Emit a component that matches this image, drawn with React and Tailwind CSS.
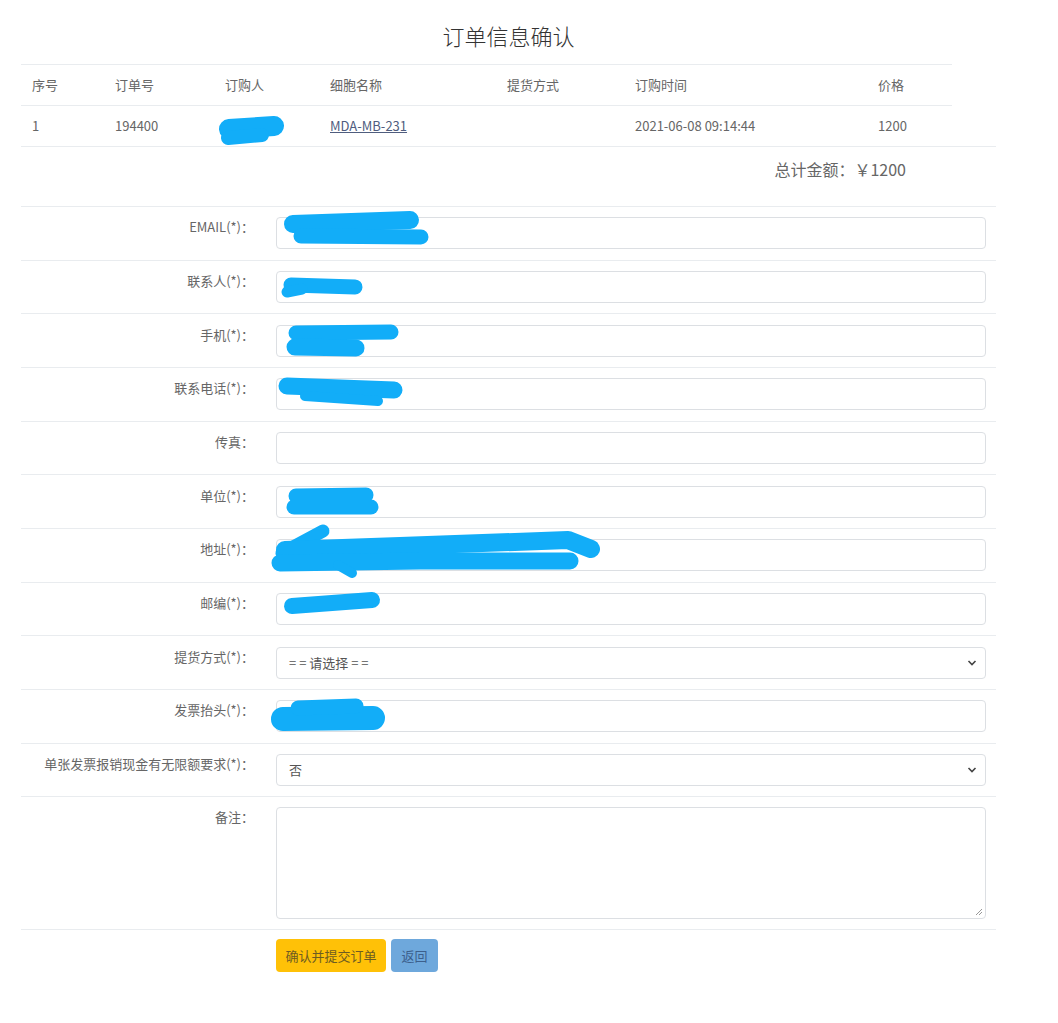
import React from 'react';

const cols = [
    { title: '序号', w: 'w-[83px]' },
    { title: '订单号', w: 'w-[110px]' },
    { title: '订购人', w: 'w-[105px]' },
    { title: '细胞名称', w: 'w-[177px]' },
    { title: '提货方式', w: 'w-[128px]' },
    { title: '订购时间', w: 'w-[243px]' },
    { title: '价格', w: 'w-[85px]' },
];

const fields = [
    { label: 'EMAIL(*)：', type: 'input' },
    { label: '联系人(*)：', type: 'input' },
    { label: '手机(*)：', type: 'input' },
    { label: '联系电话(*)：', type: 'input' },
    { label: '传真：', type: 'input' },
    { label: '单位(*)：', type: 'input' },
    { label: '地址(*)：', type: 'input' },
    { label: '邮编(*)：', type: 'input' },
    { label: '提货方式(*)：', type: 'select', value: '= = 请选择 = =' },
    { label: '发票抬头(*)：', type: 'input' },
    { label: '单张发票报销现金有无限额要求(*)：', type: 'select', value: '否' },
];

// redaction scribbles, page coordinates
const scribbles = [
    ['M229 129 L274 126', 20], ['M228 138 L262 135', 14],
    ['M293 224 L410 220', 18], ['M301 236 L421 237', 15],
    ['M291 285 L355 287', 15], ['M287 292 L302 289', 11],
    ['M296 333 L391 332', 15], ['M295 347 L356 348', 17],
    ['M287 386 L394 390', 17], ['M305 396 L378 401', 10],
    ['M296 496 L366 495', 15], ['M294 507 L371 507', 15],
    ['M282 553 L323 531', 13], ['M285 550 L400 546 L568 540 L591 549', 18], ['M280 563 L420 561 L570 561', 17], ['M338 565 L352 573', 10],
    ['M292 606 L372 600', 16],
    ['M283 719 L373 718', 24], ['M298 708 L356 706', 15],
];

const Field = ({ f }) => {
    if (f.type === 'select') {
        return (
            <div className="relative flex-1">
                <div className="h-[32px] w-full border border-[#dcdfe3] rounded-[4px] bg-white flex items-center pl-[12px] text-[13px] text-[#555]">
                    {f.value}
                </div>
                <svg className="absolute right-[9px] top-[12px]" width="10" height="8" viewBox="0 0 10 8">
                    <path d="M1.5 2 L5 5.5 L8.5 2" fill="none" stroke="#444" strokeWidth="1.6" />
                </svg>
            </div>
        );
    }
    return <div className="flex-1 h-[32px] border border-[#dcdfe3] rounded-[4px] bg-white" />;
};

const App = () => {
    return (
        <div className="relative w-[1058px] min-h-[1023px] bg-white font-['Noto_Sans_CJK_SC','Noto_Sans',sans-serif] text-[#666]">
            <div className="ml-[21px] w-[975px] pt-[19px]">
                <h2 className="text-center text-[22px] leading-[33px] text-[#333] font-light">订单信息确认</h2>

                <div className="w-[931px] mt-[12px] text-[13px]">
                    <div className="flex border-t border-[#e9ecef] h-[41px] items-center">
                        {cols.map((c, i) => (
                            <div key={i} className={`${c.w} px-[11px]`}>{c.title}</div>
                        ))}
                    </div>
                    <div className="flex border-t border-[#e9ecef] h-[41px] items-center">
                        <div className="w-[83px] px-[11px]">1</div>
                        <div className="w-[110px] px-[11px]">194400</div>
                        <div className="w-[105px] px-[11px]"></div>
                        <div className="w-[177px] px-[11px]"><a className="underline text-[#4f5d7e]">MDA-MB-231</a></div>
                        <div className="w-[128px] px-[11px]"></div>
                        <div className="w-[243px] px-[11px]">2021-06-08 09:14:44</div>
                        <div className="w-[85px] px-[11px]">1200</div>
                    </div>
                </div>

                <div className="border-t border-[#e9ecef] h-[60px] flex items-start justify-end pt-[10px] pr-[90px] text-[16px] leading-[24px] text-[#666]">
                    总计金额：￥1200
                </div>

                <div className="text-[13px]">
                    {fields.map((f, i) => (
                        <div key={i} className="flex border-t border-[#e9ecef] py-[10.33px] pr-[10px]">
                            <div className="w-[255px] shrink-0 text-right pr-[22px] leading-[20px]">{f.label}</div>
                            <Field f={f} />
                        </div>
                    ))}
                    <div className="flex border-t border-[#e9ecef] py-[10px] pr-[10px]">
                        <div className="w-[255px] shrink-0 text-right pr-[22px] leading-[20px]">备注：</div>
                        <div className="relative flex-1 h-[112px] border border-[#dcdfe3] rounded-[4px] bg-white">
                            <svg className="absolute right-[2px] bottom-[2px]" width="8" height="8" viewBox="0 0 8 8">
                                <path d="M7 1 L1 7 M7 4 L4 7" stroke="#999" strokeWidth="1" />
                            </svg>
                        </div>
                    </div>
                    <div className="flex border-t border-[#e9ecef] pt-[9px] pl-[255px] gap-[5px]">
                        <button className="h-[33px] w-[110px] rounded-[4px] bg-[#ffc107] text-[#6e5c22] text-[13px]">确认并提交订单</button>
                        <button className="h-[33px] w-[47px] rounded-[4px] bg-[#6ea8dc] text-[#3c5f8c] text-[13px]">返回</button>
                    </div>
                </div>
            </div>

            <svg className="absolute left-0 top-0 pointer-events-none" width="1058" height="1023">
                {scribbles.map(([d, w], i) => (
                    <path key={i} d={d} fill="none" stroke="#12adf8" strokeWidth={w} strokeLinecap="round" strokeLinejoin="round" />
                ))}
            </svg>
        </div>
    );
};

export default App;
